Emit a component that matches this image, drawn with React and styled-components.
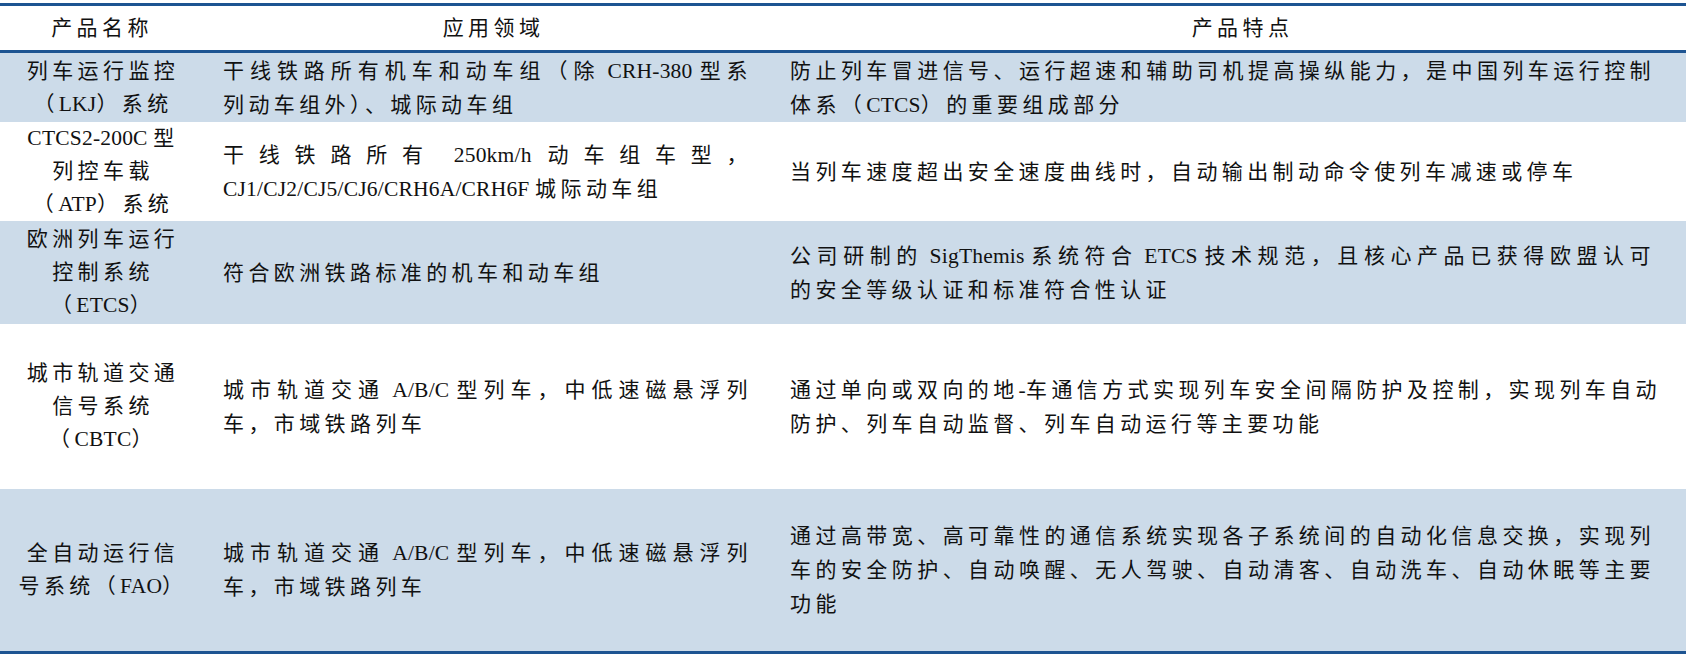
import styled, { createGlobalStyle } from 'styled-components';

const GlobalStyle = createGlobalStyle`
  html, body {
    margin: 0;
    padding: 0;
    background: #ffffff;
  }
  body {
    font-family: "Liberation Serif", "Noto Sans CJK SC", serif;
    color: #111111;
  }
`;

const rows = [
  {
    name: ['列车运行监控', '（LKJ）系统'],
    field: ['干线铁路所有机车和动车组（除 CRH-380 型系', '列动车组外）、城际动车组'],
    feature: ['防止列车冒进信号、运行超速和辅助司机提高操纵能力，是中国列车运行控制', '体系（CTCS）的重要组成部分'],
    height: 69,
    shade: true,
  },
  {
    name: ['CTCS2-200C 型', '列控车载', '（ATP）系统'],
    field: ['干线铁路所有 250km/h 动车组车型，', 'CJ1/CJ2/CJ5/CJ6/CRH6A/CRH6F 城际动车组'],
    feature: ['当列车速度超出安全速度曲线时，自动输出制动命令使列车减速或停车'],
    height: 99,
  },
  {
    name: ['欧洲列车运行', '控制系统', '（ETCS）'],
    field: ['符合欧洲铁路标准的机车和动车组'],
    feature: ['公司研制的 SigThemis 系统符合 ETCS 技术规范，且核心产品已获得欧盟认可', '的安全等级认证和标准符合性认证'],
    height: 103,
    shade: true,
  },
  {
    name: ['城市轨道交通', '信号系统', '（CBTC）'],
    field: ['城市轨道交通 A/B/C 型列车，中低速磁悬浮列', '车，市域铁路列车'],
    feature: ['通过单向或双向的地-车通信方式实现列车安全间隔防护及控制，实现列车自动', '防护、列车自动监督、列车自动运行等主要功能'],
    height: 165,
  },
  {
    name: ['全自动运行信', '号系统（FAO）'],
    field: ['城市轨道交通 A/B/C 型列车，中低速磁悬浮列', '车，市域铁路列车'],
    feature: ['通过高带宽、高可靠性的通信系统实现各子系统间的自动化信息交换，实现列', '车的安全防护、自动唤醒、无人驾驶、自动清客、自动洗车、自动休眠等主要', '功能'],
    height: 162,
    shade: true,
  },
];

// latin runs get the Times metrics, CJK keeps the wide grid spacing
function Mixed({ text }) {
  return text.split(/([\x00-\x7f]+)/).map((part, i) =>
    /^[\x00-\x7f]+$/.test(part) ? <Latin key={i}>{part}</Latin> : part
  );
}

function Lines({ lines, align }) {
  return lines.map((line, i) => (
    <Line key={i} $align={align} $justify={align === 'justify' && i < lines.length - 1}>
      <Mixed text={line} />
    </Line>
  ));
}

const App = () => {
  return (
    <Page>
      <GlobalStyle />
      <Table>
        <HeadRow>
          <HeadCell $shift={2}>产品名称</HeadCell>
          <HeadCell $shift={16}>应用领域</HeadCell>
          <HeadCell $shift={30}>产品特点</HeadCell>
        </HeadRow>
        {rows.map((row, i) => (
          <Row key={i} $height={row.height} $shade={row.shade}>
            <NameCell>
              <Lines lines={row.name} align="center" />
            </NameCell>
            <TextCell>
              <Lines lines={row.field} align="justify" />
            </TextCell>
            <TextCell $right={31}>
              <Lines lines={row.feature} align="justify" />
            </TextCell>
          </Row>
        ))}
      </Table>
    </Page>
  );
};

export default App;

const Page = styled.div`
  padding-top: 3px;
  width: 1686px;
`;
const Table = styled.div`
  border-top: 3px solid #1d5492;
  border-bottom: 3px solid #1d5492;
`;
const HeadRow = styled.div`
  display: grid;
  grid-template-columns: 202px 567px 1fr;
  height: 44px;
  border-bottom: 3px solid #1d5492;
  background: #ffffff;
`;
const HeadCell = styled.div`
  display: flex;
  align-items: center;
  justify-content: center;
  padding-left: ${(p) => p.$shift}px;
  font-size: 21px;
  letter-spacing: 4.4px;
  line-height: 34px;
`;
const Row = styled.div`
  display: grid;
  grid-template-columns: 202px 567px 1fr;
  height: ${(p) => p.$height}px;
  background: ${(p) => (p.$shade ? '#ccdbe9' : '#ffffff')};
`;
const NameCell = styled.div`
  display: flex;
  flex-direction: column;
  justify-content: center;
  padding-left: 4px;
  font-size: 21px;
  letter-spacing: 4.4px;
  line-height: 33px;
`;
const TextCell = styled.div`
  display: flex;
  flex-direction: column;
  justify-content: center;
  padding: 0 ${(p) => p.$right || 17}px 0 21px;
  font-size: 21px;
  letter-spacing: 4.4px;
  line-height: 34px;
`;
const Line = styled.div`
  white-space: nowrap;
  text-align: ${(p) => p.$align};
  text-align-last: ${(p) => (p.$justify ? 'justify' : 'auto')};
`;
const Latin = styled.span`
  font-size: 21.5px;
  letter-spacing: 0.2px;
`;
